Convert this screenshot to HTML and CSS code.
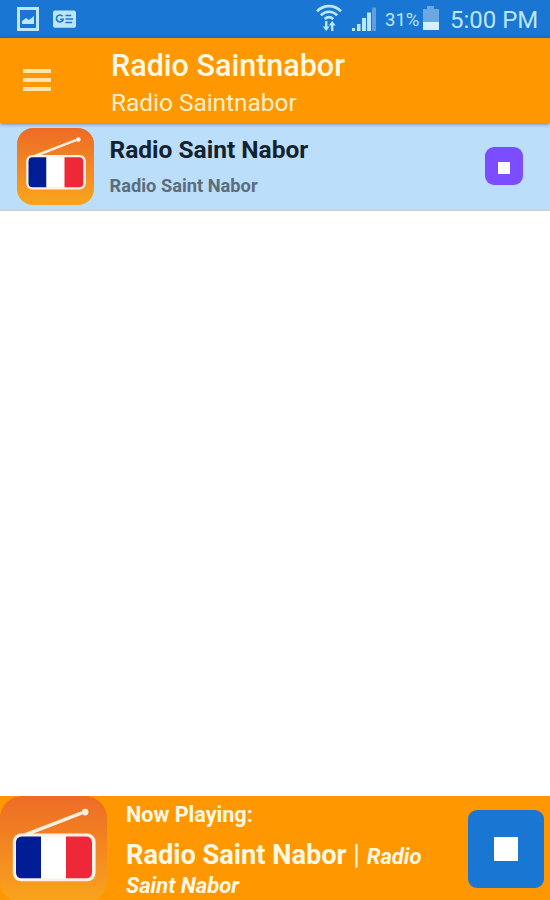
FILE: index.html
```html
<!DOCTYPE html>
<html lang="en">
<head>
    <meta charset="UTF-8">
    <meta name="viewport" content="width=device-width, initial-scale=1.0">
    <title>Radio Saintnabor</title>
    <link rel="stylesheet" href="styles.css">
</head>
<body>
    <div class="app">
        <div class="statusbar">
            <svg class="icon-image" width="22" height="24" viewBox="0 0 22 24">
                <rect x="1.5" y="1.5" width="19" height="21" fill="none" stroke="#bde6fb" stroke-width="3"/>
                <path d="M5 17v-3l4-3 3 2 5-4v8z" fill="#bde6fb"/>
            </svg>
            <svg class="icon-news" width="23" height="18" viewBox="0 0 24 18">
                <rect width="24" height="18" rx="2" fill="#bde6fb"/>
                <path d="M10 6.2A3.6 3.6 0 1 0 10.7 9.3H7.5" fill="none" stroke="#1976d2" stroke-width="1.7"/>
                <path d="M13 5.3h6M13 9h8M13 12.7h7" stroke="#1976d2" stroke-width="1.6"/>
            </svg>
            <svg class="icon-wifi" width="26" height="28" viewBox="0 0 26 28">
                <g fill="none" stroke="#bde6fb" stroke-width="2.6">
                    <path d="M1 7.2C8 .4 18 .4 25 7.2"/>
                    <path d="M4.8 11.2c4.8-4.6 11.6-4.6 16.4 0"/>
                    <path d="M8.6 15c2.7-2.4 6.1-2.4 8.800 0"/>
                </g>
                <path d="M9 17h2.400v5.500h2.300L10.200 27 6.700 22.500H9zM15 27v-5.500h-2.300l3.500-4.500 3.500 4.500h-2.300V27z" fill="#bde6fb"/>
            </svg>
            <svg class="icon-signal" width="26" height="26" viewBox="0 0 26 26">
                <path d="M1 23h3v3H1zM6 19h3.500v7H6zM11 13h4v13h-4zM16 7.500h4v18.500h-4z" fill="#bde6fb"/>
                <path d="M21 2.500h4v23.500h-4z" fill="#5f9fdf"/>
            </svg>
            <span class="battery-text">31%</span>
            <svg class="icon-battery" width="16" height="24" viewBox="0 0 16 24">
                <path d="M0 3h4V0h7v3h5v14H0z" fill="#6ca7e2"/>
                <path d="M0 16h16v8H0z" fill="#d5f1fd"/>
            </svg>
            <span class="clock">5:00 PM</span>
        </div>
        <div class="toolbar">
            <div class="menu">
                <span></span>
                <span></span>
                <span></span>
            </div>
            <div class="titles">
                <h1>Radio Saintnabor</h1>
                <h2>Radio Saintnabor</h2>
            </div>
        </div>
        <div class="station">
            <svg class="station-logo" viewBox="0 0 77 77">
                <defs>
                    <linearGradient id="logoBg" x1="0" y1="0" x2="0" y2="1">
                        <stop offset="0" stop-color="#ed6b26"/>
                        <stop offset="1" stop-color="#f9a51c"/>
                    </linearGradient>
                </defs>
                <g id="logo">
                    <rect width="77" height="77" rx="16" fill="url(#logoBg)"/>
                    <path d="M18 28L59 12.2" stroke="#fdeedd" stroke-width="2.5"/>
                    <circle cx="61.3" cy="11.6" r="2.4" fill="#fdeedd"/>
                    <rect x="9.2" y="27" width="59.6" height="34.4" rx="6" fill="#fdf1e6"/>
                    <path d="M29.5 29.2H15.500a4 4 0 0 0-4 4v22a4 4 0 0 0 4 4h14z" fill="#001d96"/>
                    <rect x="29.5" y="29.2" width="18" height="30" fill="#fff"/>
                    <path d="M47.5 29.2h14.700a4 4 0 0 1 4 4v22a4 4 0 0 1-4 4H47.500z" fill="#ee2839"/>
                </g>
            </svg>
            <div class="station-info">
                <div class="station-name">Radio Saint Nabor</div>
                <div class="station-desc">Radio Saint Nabor</div>
            </div>
            <div class="station-stop"><i></i></div>
        </div>
        <div class="content"></div>
        <div class="player">
            <svg class="player-logo" viewBox="0 0 77 77"><use href="#logo"/></svg>
            <div class="player-info">
                <div class="player-label">Now Playing:</div>
                <div class="player-track">Radio Saint Nabor <span class="bar">|</span> <em>Radio</em></div>
                <em class="player-rest">Saint Nabor</em>
            </div>
            <div class="player-stop"><i></i></div>
        </div>
    </div>
</body>
</html>
```

FILE: styles.css
```css
* {
    box-sizing: border-box;
}
body {
    font-family: Roboto, "Liberation Sans", sans-serif;
    margin: 0;
    background-color: #fff;
}
.app {
    display: flex;
    flex-direction: column;
    height: 900px;
    width: 550px;
    overflow: hidden;
}
.statusbar {
    display: flex;
    align-items: center;
    height: 38px;
    flex: none;
    padding-left: 17px;
    background-color: #1976d2;
    color: #bde6fb;
    white-space: nowrap;
}
.icon-news {
    margin-left: 14px;
}
.icon-wifi {
    margin-left: 240px;
    margin-top: -3px;
}
.icon-signal {
    margin-left: 9px;
    margin-top: -2px;
}
.battery-text {
    width: 33px;
    margin-left: 8px;
    font-size: 18.5px;
    margin-top: 1px;
}
.icon-battery {
    margin-left: 5px;
    margin-top: -3px;
}
.clock {
    margin-left: 11px;
    font-size: 24px;
    margin-top: 1px;
}
.toolbar {
    display: flex;
    height: 85px;
    flex: none;
    background-color: #ff9800;
    box-shadow: 0 1px 4px rgba(0, 0, 0, 0.45);
    position: relative;
    color: #fff8e5;
}
.menu {
    display: flex;
    flex-direction: column;
    gap: 5px;
    width: 28px;
    margin: 31px 0 0 23px;
}
.menu span {
    height: 4px;
    background-color: #ffe3ad;
}
.titles {
    margin-left: 60px;
    padding-top: 9px;
}
.titles h1 {
    margin: 0;
    font-size: 30.5px;
    font-weight: 500;
    line-height: 37px;
}
.titles h2 {
    margin: 0;
    font-size: 24.4px;
    font-weight: 400;
    line-height: 38px;
    color: #fff0cd;
}
.station {
    display: flex;
    height: 88px;
    flex: none;
    background-color: #bbdefb;
    border-bottom: 2px solid #c8d2da;
}
.station-logo {
    width: 77px;
    height: 77px;
    margin: 4.5px 0 0 16.5px;
}
.station-info {
    flex: 1;
    margin-left: 16px;
    padding-top: 10px;
}
.station-name {
    font-size: 24.5px;
    font-weight: 700;
    line-height: 34px;
    color: #122230;
}
.station-desc {
    font-size: 18.25px;
    font-weight: 700;
    line-height: 38px;
    color: #5b6d7a;
}
.station-stop {
    display: flex;
    align-items: center;
    justify-content: center;
    width: 38px;
    height: 38px;
    margin: 24px 27px 0 0;
    border-radius: 9px;
    background-color: #7c4dff;
}
.station-stop i {
    width: 12px;
    height: 12px;
    margin-top: 4px;
    background-color: #fff;
}
.content {
    flex: 1;
}
.player {
    display: flex;
    height: 104px;
    flex: none;
    background-color: #ff9800;
    color: #fff8e5;
    overflow: hidden;
}
.player-logo {
    width: 107px;
    height: 107px;
    flex: none;
}
.player-info {
    width: 316px;
    margin-left: 19px;
    padding-top: 5px;
}
.player-label {
    font-size: 21.6px;
    font-weight: 700;
    line-height: 28px;
}
.player-track {
    margin-top: 10px;
    font-size: 27.2px;
    font-weight: 700;
    line-height: 32px;
    white-space: nowrap;
}
.player-track .bar {
    font-weight: 400;
}
.player-track em,
.player-rest {
    font-size: 22px;
    font-weight: 700;
}
.player-rest {
    display: block;
    line-height: 26px;
}
.player-stop {
    display: flex;
    align-items: center;
    justify-content: center;
    width: 76px;
    height: 78px;
    margin: 14px 0 0 26px;
    border-radius: 9px;
    background-color: #1976d2;
}
.player-stop i {
    width: 24px;
    height: 24px;
    background-color: #fff;
}
```
